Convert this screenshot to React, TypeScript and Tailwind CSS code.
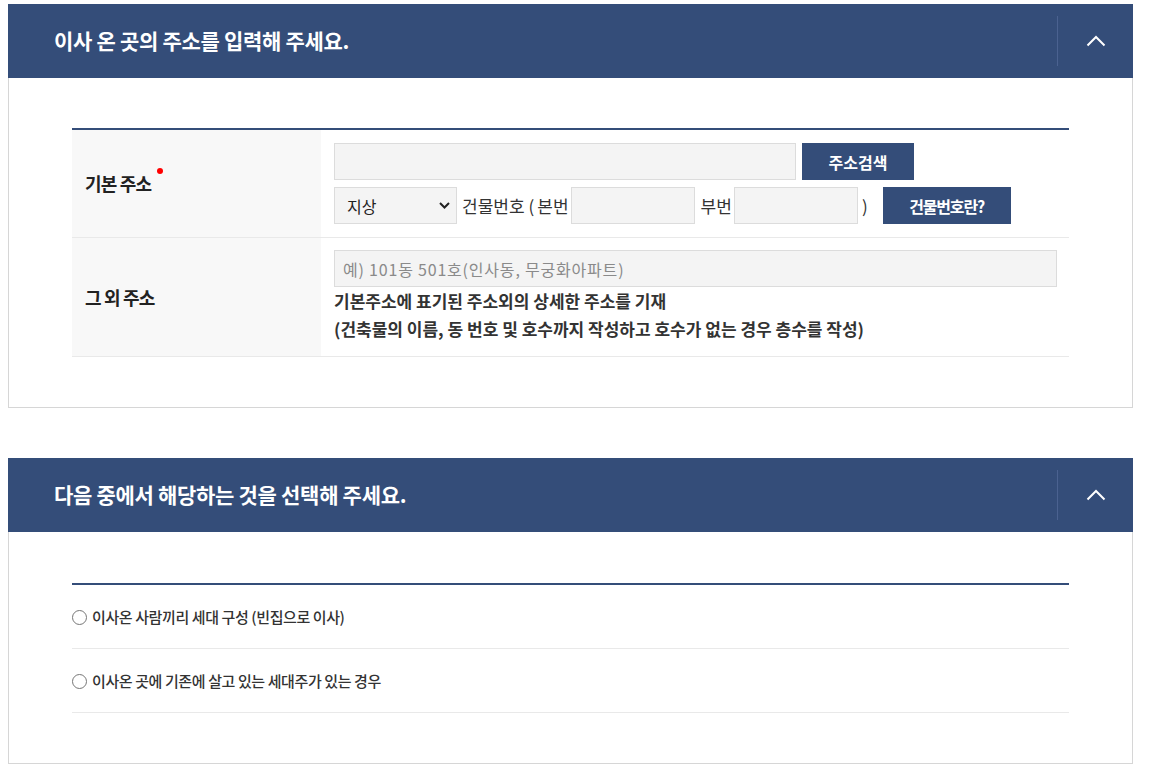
import { useState } from "react";

const NAVY = "bg-[#344d79]";

function PanelHeader({ title }: { title: string }) {
  return (
    <div className={`flex h-[74px] items-center ${NAVY}`}>
      <h2 className="flex-1 pl-[46px] text-[21px] font-bold tracking-[-0.3px] text-white">
        {title}
      </h2>
      <div className="h-[50px] w-px bg-[#4b6290]" />
      <button className="flex h-full w-[75px] items-center justify-center">
        <svg width="20" height="12" viewBox="0 0 20 12" fill="none">
          <path d="M1.5 10.5 L10 2 L18.5 10.5" stroke="white" strokeWidth="2" />
        </svg>
      </button>
    </div>
  );
}

function AddressPanel() {
  const [kind, setKind] = useState("지상");
  return (
    <section>
      <PanelHeader title="이사 온 곳의 주소를 입력해 주세요." />
      <div className="border border-t-0 border-[#d6d6d6] px-[63px] py-[50px]">
        <div className="border-t-2 border-[#344d79]">
          <div className="flex border-b border-[#e9e9e9]">
            <div className="flex w-[249px] items-center bg-[#f8f8f8] pl-[13px]">
              <span className="text-[18px] font-bold tracking-[-0.8px] text-[#222]">
                기본 주소
              </span>
              <span className="ml-[6px] mb-[26px] h-[6px] w-[6px] rounded-full bg-[#ff0000]" />
            </div>
            <div className="flex flex-col gap-[7px] py-[13px] pl-[13px]">
              <div className="flex gap-[6px]">
                <input className="h-[37px] w-[462px] border border-[#dcdcdc] bg-[#f4f4f4] outline-none" />
                <button className={`h-[37px] w-[112px] text-[16px] font-bold text-white ${NAVY}`}>
                  주소검색
                </button>
              </div>
              <div className="flex items-center text-[17px] text-[#333]">
                <div className="relative">
                  <select
                    value={kind}
                    onChange={(e) => setKind(e.target.value)}
                    className="h-[37px] w-[123px] appearance-none border border-[#dcdcdc] bg-[#f4f4f4] pl-[12px] text-[16px] text-[#222] outline-none"
                  >
                    <option>지상</option>
                    <option>지하</option>
                  </select>
                  <svg
                    className="pointer-events-none absolute right-[7px] top-[15px]"
                    width="11"
                    height="7"
                    viewBox="0 0 11 7"
                    fill="none"
                  >
                    <path d="M1 1 L5.5 5.5 L10 1" stroke="#222" strokeWidth="2" />
                  </svg>
                </div>
                <span className="ml-[5px]">건물번호</span>
                <span className="ml-[4px]">(</span>
                <span className="ml-[3px]">본번</span>
                <input className="ml-[2px] h-[37px] w-[124px] border border-[#dcdcdc] bg-[#f4f4f4] outline-none" />
                <span className="ml-[6px]">부번</span>
                <input className="ml-[2px] h-[37px] w-[124px] border border-[#dcdcdc] bg-[#f4f4f4] outline-none" />
                <span className="ml-[4px]">)</span>
                <button className={`ml-[15px] h-[37px] w-[128px] text-[16px] font-bold tracking-[-1.2px] text-white ${NAVY}`}>
                  건물번호란?
                </button>
              </div>
            </div>
          </div>
          <div className="flex border-b border-[#e9e9e9]">
            <div className="flex w-[249px] items-center bg-[#f8f8f8] pl-[13px]">
              <span className="text-[18px] font-bold tracking-[-0.8px] text-[#222]">
                그 외 주소
              </span>
            </div>
            <div className="flex flex-col pt-[12px] pb-[13px] pl-[13px]">
              <input
                placeholder="예) 101동 501호(인사동, 무궁화아파트)"
                className="h-[37px] w-[723px] border border-[#dcdcdc] bg-[#f4f4f4] pl-[8px] text-[16px] tracking-[0.8px] text-[#333] outline-none placeholder:text-[#8a8a8a]"
              />
              <p className="text-[17px] font-bold leading-[28px] text-[#333]">
                기본주소에 표기된 주소외의 상세한 주소를 기재
                <br />
                (건축물의 이름, 동 번호 및 호수까지 작성하고 호수가 없는 경우 층수를 작성)
              </p>
            </div>
          </div>
        </div>
      </div>
    </section>
  );
}

const options = [
  "이사온 사람끼리 세대 구성 (빈집으로 이사)",
  "이사온 곳에 기존에 살고 있는 세대주가 있는 경우",
];

function ChoicePanel() {
  const [picked, setPicked] = useState<number | null>(null);
  return (
    <section className="mt-[50px]">
      <PanelHeader title="다음 중에서 해당하는 것을 선택해 주세요." />
      <div className="border border-t-0 border-[#d6d6d6] px-[63px] pt-[51px] pb-[50px]">
        <div className="border-t-2 border-[#344d79]">
          {options.map((label, i) => (
            <label
              key={label}
              onClick={() => setPicked(i)}
              className="flex h-[64px] cursor-pointer items-center border-b border-[#e9e9e9] pt-[2px] text-[15px] font-medium tracking-[-0.4px] text-[#333]"
            >
              <span className="mr-[5px] flex h-[15px] w-[15px] items-center justify-center rounded-full border-[1.5px] border-[#767676] bg-white">
                {picked === i && <span className="h-[7px] w-[7px] rounded-full bg-[#344d79]" />}
              </span>
              {label}
            </label>
          ))}
        </div>
      </div>
    </section>
  );
}

export default function App() {
  return (
    <div
      className="min-h-screen bg-white pt-[4px] pl-[8px]"
      style={{ fontFamily: '"Noto Sans CJK KR", "Noto Sans", sans-serif' }}
    >
      <div className="w-[1125px]">
        <AddressPanel />
        <ChoicePanel />
      </div>
    </div>
  );
}
